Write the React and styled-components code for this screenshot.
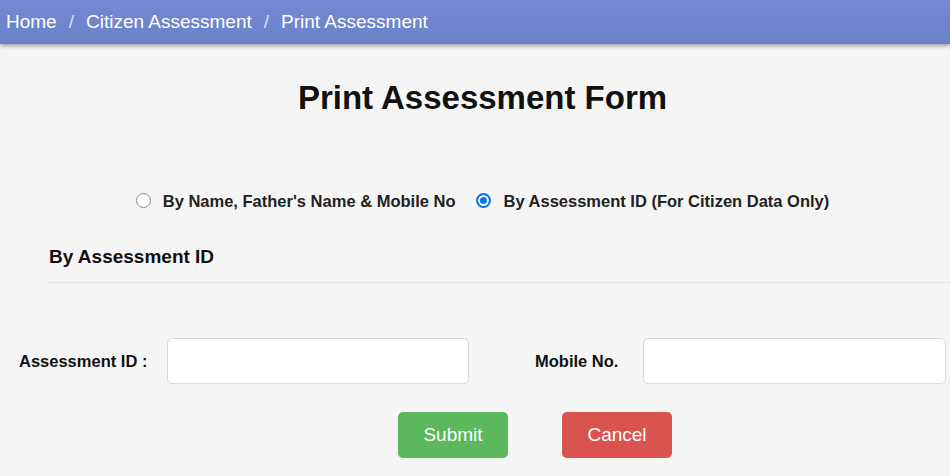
import React, { useState } from "react";
import styled, { createGlobalStyle } from "styled-components";

const GlobalStyle = createGlobalStyle`
  html, body {
    margin: 0;
    padding: 0;
    background: #f5f5f5;
    font-family: "Liberation Sans", Arial, sans-serif;
  }
`;

const Page = styled.div`
  width: 950px;
  min-height: 476px;
  background: #f5f5f5;
  overflow: hidden;
`;

const Header = styled.nav`
  height: 44px;
  background: linear-gradient(to bottom, #7887d5 0%, #6783c6 100%);
  box-shadow: 0 2px 4px rgba(0, 0, 0, 0.35);
  display: flex;
  align-items: center;
  padding-left: 6px;
  color: #fff;
  font-size: 19px;
  margin-bottom: 6px;
`;

const Crumb = styled.span`
  color: #fff;
`;

const Sep = styled.span`
  margin: 0 12px;
  color: rgba(255, 255, 255, 0.75);
`;

const Title = styled.h1`
  margin: 35px 0 0;
  padding-left: 15px;
  text-align: center;
  font-size: 33px;
  font-weight: bold;
  color: #111;
  line-height: 38px;
`;

const RadioRow = styled.div`
  display: flex;
  justify-content: center;
  align-items: center;
  padding-left: 15px;
  margin-top: 72px;
  height: 24px;
`;

const Option = styled.label`
  display: flex;
  align-items: center;
  font-size: 16.5px;
  font-weight: bold;
  color: #222;
  margin-right: ${p => p.$gap || 0}px;
  cursor: pointer;
`;

const Radio = styled.input.attrs({ type: "radio" })`
  appearance: none;
  margin: 0 12px 2px 0;
  width: 15px;
  height: 15px;
  border-radius: 50%;
  border: 1px solid #8a8a8a;
  background: #fff;
  &:checked {
    border: 2px solid #0a75f0;
    background: #0a75f0;
    box-shadow: inset 0 0 0 2px #fff;
  }
`;

const Section = styled.div`
  margin: 33px 0 0 48px;
  border-bottom: 1px solid #e2e2e2;
  padding: 0 0 14px 1px;
  font-size: 19px;
  font-weight: bold;
  color: #111;
`;

const FieldRow = styled.div`
  display: grid;
  grid-template-columns: 148px 302px 174px 303px;
  align-items: center;
  padding-left: 19px;
  margin-top: 55px;
`;

const Label = styled.label`
  font-size: 16.5px;
  font-weight: bold;
  color: #111;
  padding-left: ${p => p.$indent || 0}px;
`;

const Input = styled.input`
  box-sizing: border-box;
  height: 46px;
  width: 100%;
  border: 1px solid #d9d9d9;
  border-radius: 5px;
  background: #fff;
  padding: 0 12px;
  font-size: 16px;
  font-family: inherit;
  outline: none;
`;

const Buttons = styled.div`
  display: flex;
  gap: 54px;
  padding-left: 398px;
  margin-top: 28px;
`;

const Button = styled.button`
  width: 110px;
  height: 46px;
  border: none;
  border-radius: 5px;
  background: ${p => p.$color};
  color: #fff;
  font-size: 19px;
  font-family: inherit;
  cursor: pointer;
`;

export default function App() {
  const [mode, setMode] = useState("id");
  return (
    <Page>
      <GlobalStyle />
      <Header>
        <Crumb>Home</Crumb>
        <Sep>/</Sep>
        <Crumb>Citizen Assessment</Crumb>
        <Sep>/</Sep>
        <Crumb>Print Assessment</Crumb>
      </Header>
      <Title>Print Assessment Form</Title>
      <RadioRow>
        <Option $gap={21}>
          <Radio name="mode" checked={mode === "name"} onChange={() => setMode("name")} />
          By Name, Father's Name &amp; Mobile No
        </Option>
        <Option>
          <Radio name="mode" checked={mode === "id"} onChange={() => setMode("id")} />
          By Assessment ID (For Citizen Data Only)
        </Option>
      </RadioRow>
      <Section>By Assessment ID</Section>
      <FieldRow>
        <Label>Assessment ID :</Label>
        <Input />
        <Label $indent={66}>Mobile No.</Label>
        <Input />
      </FieldRow>
      <Buttons>
        <Button $color="#5cb85c">Submit</Button>
        <Button $color="#d9534f">Cancel</Button>
      </Buttons>
    </Page>
  );
}
